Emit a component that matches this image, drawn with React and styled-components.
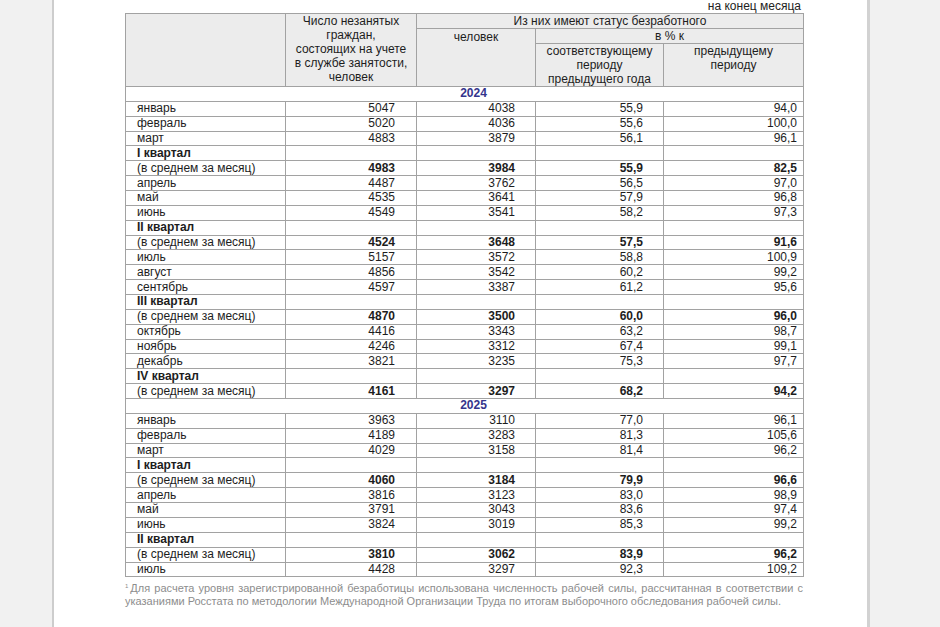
import React from 'react';
import styled, { createGlobalStyle } from 'styled-components';

const GlobalStyle = createGlobalStyle`
  html, body {
    margin: 0;
    padding: 0;
    background: #f1f1f1;
    overflow: hidden;
  }
  body {
    font-family: "Liberation Sans", Arial, sans-serif;
  }
`;

const data = [
  {
    year: '2024',
    rows: [
      ['январь', '5047', '4038', '55,9', '94,0'],
      ['февраль', '5020', '4036', '55,6', '100,0'],
      ['март', '4883', '3879', '56,1', '96,1'],
      ['I квартал'],
      ['(в среднем за месяц)', '4983', '3984', '55,9', '82,5'],
      ['апрель', '4487', '3762', '56,5', '97,0'],
      ['май', '4535', '3641', '57,9', '96,8'],
      ['июнь', '4549', '3541', '58,2', '97,3'],
      ['II квартал'],
      ['(в среднем за месяц)', '4524', '3648', '57,5', '91,6'],
      ['июль', '5157', '3572', '58,8', '100,9'],
      ['август', '4856', '3542', '60,2', '99,2'],
      ['сентябрь', '4597', '3387', '61,2', '95,6'],
      ['III квартал'],
      ['(в среднем за месяц)', '4870', '3500', '60,0', '96,0'],
      ['октябрь', '4416', '3343', '63,2', '98,7'],
      ['ноябрь', '4246', '3312', '67,4', '99,1'],
      ['декабрь', '3821', '3235', '75,3', '97,7'],
      ['IV квартал'],
      ['(в среднем за месяц)', '4161', '3297', '68,2', '94,2'],
    ],
  },
  {
    year: '2025',
    rows: [
      ['январь', '3963', '3110', '77,0', '96,1'],
      ['февраль', '4189', '3283', '81,3', '105,6'],
      ['март', '4029', '3158', '81,4', '96,2'],
      ['I квартал'],
      ['(в среднем за месяц)', '4060', '3184', '79,9', '96,6'],
      ['апрель', '3816', '3123', '83,0', '98,9'],
      ['май', '3791', '3043', '83,6', '97,4'],
      ['июнь', '3824', '3019', '85,3', '99,2'],
      ['II квартал'],
      ['(в среднем за месяц)', '3810', '3062', '83,9', '96,2'],
      ['июль', '4428', '3297', '92,3', '109,2'],
    ],
  },
];

// right padding of each number column, as in the source document
const numPad = [21, 20, 20, 6];

const App = () => {
  return (
    <>
      <GlobalStyle />
      <Viewer>
        <Page>
          <Sheet>
            <Note>на конец месяца</Note>
            <Table>
              <colgroup>
                <col style={{ width: 160 }} />
                <col style={{ width: 131 }} />
                <col style={{ width: 119 }} />
                <col style={{ width: 128 }} />
                <col style={{ width: 140 }} />
              </colgroup>
              <thead>
                <HeadRow $h={13}>
                  <Head rowSpan={3} />
                  <Head rowSpan={3}>
                    Число незанятых<br />граждан,<br />состоящих на учете<br />в службе занятости,<br />человек
                  </Head>
                  <Head colSpan={3}>Из них имеют статус безработного</Head>
                </HeadRow>
                <HeadRow $h={15}>
                  <Head rowSpan={2} $top={1}>человек</Head>
                  <Head colSpan={2}>в % к</Head>
                </HeadRow>
                <HeadRow $h={40}>
                  <Head>соответствующему<br />периоду<br />предыдущего года</Head>
                  <Head>предыдущему<br />периоду</Head>
                </HeadRow>
              </thead>
              {data.map((section) => (
                <tbody key={section.year}>
                  <Row>
                    <Year colSpan={5}>{section.year}</Year>
                  </Row>
                  {section.rows.map((r, i) => {
                    const quarter = r.length === 1;
                    const avg = r[0].startsWith('(');
                    return (
                      <Row key={i}>
                        <Label $bold={quarter}>{r[0]}</Label>
                        {[0, 1, 2, 3].map((c) => (
                          <Num key={c} $pad={numPad[c]} $bold={avg}>
                            {quarter ? '' : r[c + 1]}
                          </Num>
                        ))}
                      </Row>
                    );
                  })}
                </tbody>
              ))}
            </Table>
            <Footnote>
              <Mark>1</Mark>Для расчета уровня зарегистрированной безработицы использована численность рабочей силы,
              рассчитанная в соответствии с указаниями Росстата по методологии Международной Организации Труда по
              итогам выборочного обследования рабочей силы.
            </Footnote>
          </Sheet>
        </Page>
      </Viewer>
    </>
  );
};

const Viewer = styled.div`
  height: 627px;
  display: flex;
  align-items: stretch;
`;

const Page = styled.div`
  box-sizing: border-box;
  margin-left: 52px;
  width: 818px;
  height: 627px;
  background: #ffffff;
  border-left: 2px solid #cdcdcd;
  border-right: 3px solid #d2d2d2;
  padding-left: 71px;
`;

const Sheet = styled.div`
  width: 678px;
`;

const Note = styled.div`
  font-size: 12px;
  line-height: 12px;
  color: #222;
  text-align: right;
  padding-right: 2px;
  margin-bottom: 1px;
`;

const Table = styled.table`
  width: 678px;
  table-layout: fixed;
  border-collapse: collapse;
  font-size: 12px;
  color: #1d1d1d;

  td,
  th {
    border: 1px solid #a2a2a2;
    padding: 0;
  }
`;

const HeadRow = styled.tr`
  height: ${(p) => p.$h}px;
`;

const Head = styled.th`
  background: #ececec;
  font-weight: normal;
  text-align: center;
  vertical-align: top;
  line-height: 14px;
  padding-top: ${(p) => p.$top || 0}px !important;
`;

const Row = styled.tr`
  height: 14.87px;
`;

const Year = styled.td`
  background: #fff;
  text-align: center;
  font-weight: bold;
  color: #34348c;
  line-height: 13px;
  padding-left: 18px !important;
`;

const Label = styled.td`
  line-height: 13px;
  padding-left: 11px !important;
  font-weight: ${(p) => (p.$bold ? 'bold' : 'normal')};
  white-space: nowrap;
`;

const Num = styled.td`
  line-height: 13px;
  text-align: right;
  padding-right: ${(p) => p.$pad}px !important;
  font-weight: ${(p) => (p.$bold ? 'bold' : 'normal')};
`;

const Footnote = styled.p`
  margin: 5px 0 0;
  font-size: 11px;
  line-height: 13px;
  color: #8d8d8d;
  text-align: justify;
`;

const Mark = styled.span`
  font-size: 6px;
  line-height: 0;
  vertical-align: 4px;
  margin-right: 2px;
`;

export default App;
